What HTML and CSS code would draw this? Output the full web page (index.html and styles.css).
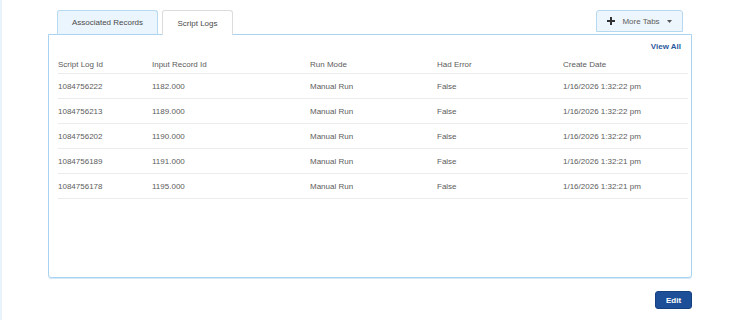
FILE: index.html
```html
<!DOCTYPE html>
<html>
<head>
<meta charset="utf-8">
<link rel="stylesheet" href="styles.css">
</head>
<body>
<div class="strip"></div>
<div class="wrap">
  <div class="tabbar">
    <div class="tab tab-assoc">Associated Records</div>
    <div class="tab tab-logs">Script Logs</div>
    <div class="more">
      <svg class="plus" width="8" height="8" viewBox="0 0 8 8"><rect x="3" y="0" width="2" height="8" fill="#333"/><rect x="0" y="3" width="8" height="2" fill="#333"/></svg>
      <span>More Tabs</span>
      <svg class="caret" width="5" height="3" viewBox="0 0 5 3"><polygon points="0,0 5,0 2.5,3" fill="#555"/></svg>
    </div>
  </div>
  <div class="panel">
    <div class="viewall-row"><a class="viewall">View All</a></div>
    <div class="table">
      <div class="row head">
        <div class="c1">Script Log Id</div><div class="c2">Input Record Id</div><div class="c3">Run Mode</div><div class="c4">Had Error</div><div class="c5">Create Date</div>
      </div>
      <div class="row">
        <div class="c1">1084756222</div><div class="c2">1182.000</div><div class="c3">Manual Run</div><div class="c4">False</div><div class="c5">1/16/2026 1:32:22 pm</div>
      </div>
      <div class="row">
        <div class="c1">1084756213</div><div class="c2">1189.000</div><div class="c3">Manual Run</div><div class="c4">False</div><div class="c5">1/16/2026 1:32:22 pm</div>
      </div>
      <div class="row">
        <div class="c1">1084756202</div><div class="c2">1190.000</div><div class="c3">Manual Run</div><div class="c4">False</div><div class="c5">1/16/2026 1:32:22 pm</div>
      </div>
      <div class="row">
        <div class="c1">1084756189</div><div class="c2">1191.000</div><div class="c3">Manual Run</div><div class="c4">False</div><div class="c5">1/16/2026 1:32:21 pm</div>
      </div>
      <div class="row">
        <div class="c1">1084756178</div><div class="c2">1195.000</div><div class="c3">Manual Run</div><div class="c4">False</div><div class="c5">1/16/2026 1:32:21 pm</div>
      </div>
    </div>
  </div>
  <div class="actions"><button class="edit">Edit</button></div>
</div>
</body>
</html>
```
FILE: styles.css
```css
html, body {
  margin: 0;
  padding: 0;
  background: #fff;
  font-family: "Liberation Sans", Arial, sans-serif;
  font-size: 8px;
  color: #5c5c5c;
  height: 320px;
  overflow: hidden;
}
body {
  display: flex;
}
.strip {
  width: 2px;
  height: 320px;
  background: #e8f3fc;
  flex: none;
}
.wrap {
  margin-left: 46px;
  width: 644px;
  display: flex;
  flex-direction: column;
}
.tabbar {
  display: flex;
  align-items: flex-start;
  padding-top: 10px;
  height: 24px;
  padding-left: 9px;
  padding-right: 9px;
}
.tab {
  box-sizing: border-box;
  height: 25px;
  display: flex;
  align-items: center;
  justify-content: center;
  color: #4a4a4a;
  border-radius: 3px 3px 0 0;
  position: relative;
  z-index: 2;
}
.tab-assoc {
  width: 101px;
  background: #eaf5fd;
  border: 1px solid #b7daf3;
  border-bottom-color: #a9d3f1;
}
.tab-logs {
  width: 71px;
  margin-left: 4px;
  background: #fff;
  border: 1px solid #dcdcdc;
  border-bottom: none;
}
.more {
  margin-left: auto;
  box-sizing: border-box;
  width: 87px;
  height: 22px;
  background: #eef6fd;
  border: 1px solid #b7d8f1;
  border-radius: 3px 3px 0 0;
  display: flex;
  align-items: center;
  justify-content: center;
  gap: 7px;
  color: #5c5c5c;
}
.panel {
  box-sizing: border-box;
  height: 244px;
  border: 1px solid #a9d3f1;
  border-radius: 0 0 3px 3px;
  box-shadow: 0 1px 0 #d4eaf9;
  padding: 0 3px 0 9px;
}
.viewall-row {
  display: flex;
  justify-content: flex-end;
  height: 21px;
  align-items: center;
  padding-top: 1px;
  padding-right: 7px;
}
.viewall {
  color: #2a5a9c;
  font-weight: bold;
}
.table {
  display: flex;
  flex-direction: column;
}
.row {
  display: flex;
  height: 25px;
  align-items: center;
  border-bottom: 1px solid #ececec;
  box-sizing: border-box;
}
.row.head {
  height: 17px;
  align-items: flex-start;
  padding-top: 3px;
}
.c1 { width: 94px; }
.c2 { width: 158px; }
.c3 { width: 127px; }
.c4 { width: 126px; }
.c5 { flex: 1; }
.actions {
  display: flex;
  justify-content: flex-end;
  padding-top: 13px;
}
.edit {
  width: 37px;
  height: 18px;
  background: #1d4f99;
  color: #fff;
  border: 1px solid #16407f;
  border-radius: 3px;
  font-family: "Liberation Sans", Arial, sans-serif;
  font-size: 8px;
  font-weight: bold;
  padding: 0;
}
```
